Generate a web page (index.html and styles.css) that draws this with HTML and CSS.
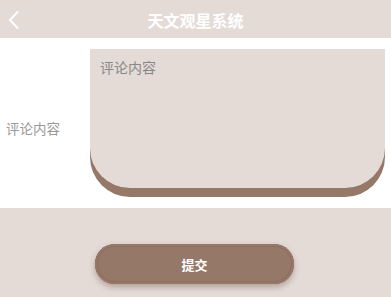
FILE: index.html
```html
<!DOCTYPE html>
<html lang="zh">
<head>
<meta charset="utf-8">
<title>天文观星系统</title>
<link rel="stylesheet" href="styles.css">
</head>
<body>
<header class="topbar">
  <span class="back">
    <svg width="12" height="20" viewBox="0 0 12 20"><path d="M10 1.5 L2 10 L10 18.5" fill="none" stroke="#fff" stroke-width="2"/></svg>
  </span>
  <h1 class="title">天文观星系统</h1>
  <span></span>
</header>
<section class="form">
  <label class="label" for="c">评论内容</label>
  <textarea id="c" class="box" placeholder="评论内容"></textarea>
</section>
<section class="actions">
  <button class="submit">提交</button>
</section>
</body>
</html>
```
FILE: styles.css
```css
html, body {
  margin: 0;
  padding: 0;
  height: 100%;
}
body {
  font-family: "Noto Sans CJK SC", "Noto Sans", sans-serif;
  background: #e4dbd7;
  display: flex;
  flex-direction: column;
}
.topbar {
  height: 38px;
  background: #e4dbd7;
  display: grid;
  grid-template-columns: 40px 1fr 40px;
  align-items: center;
}
.back {
  display: flex;
  padding-left: 8px;
  padding-top: 1px;
}
.title {
  margin: 0;
  text-align: center;
  color: #fff;
  font-size: 16px;
  font-weight: bold;
  line-height: 20px;
  padding-top: 1px;
}
.form {
  background: #fff;
  display: flex;
  align-items: center;
  padding: 11px 6px 20px 6px;
}
.label {
  width: 84px;
  font-size: 13.5px;
  color: #999;
  padding-top: 18px;
}
.box {
  width: 295px;
  height: 139px;
  box-sizing: border-box;
  border: none;
  outline: none;
  resize: none;
  background: #e4dbd7;
  border-radius: 0 0 40px 40px;
  box-shadow: 0 9px 0 #967869;
  padding: 8px 10px;
  font-family: inherit;
  font-size: 14px;
  line-height: 20px;
  color: #666;
}
.box::placeholder {
  color: #888;
}
.actions {
  flex: 1;
  background: #e4dbd7;
  padding-top: 36px;
  padding-left: 95px;
}
.submit {
  width: 199px;
  height: 40px;
  border: none;
  border-radius: 20px;
  background: #967869;
  box-shadow: inset 0 0 0 2px #967869, inset 0 0 0 3px #8d6e60, 0 3px 6px rgba(120, 85, 70, 0.45);
  color: #fff;
  font-family: inherit;
  font-size: 13px;
  font-weight: bold;
}
```
